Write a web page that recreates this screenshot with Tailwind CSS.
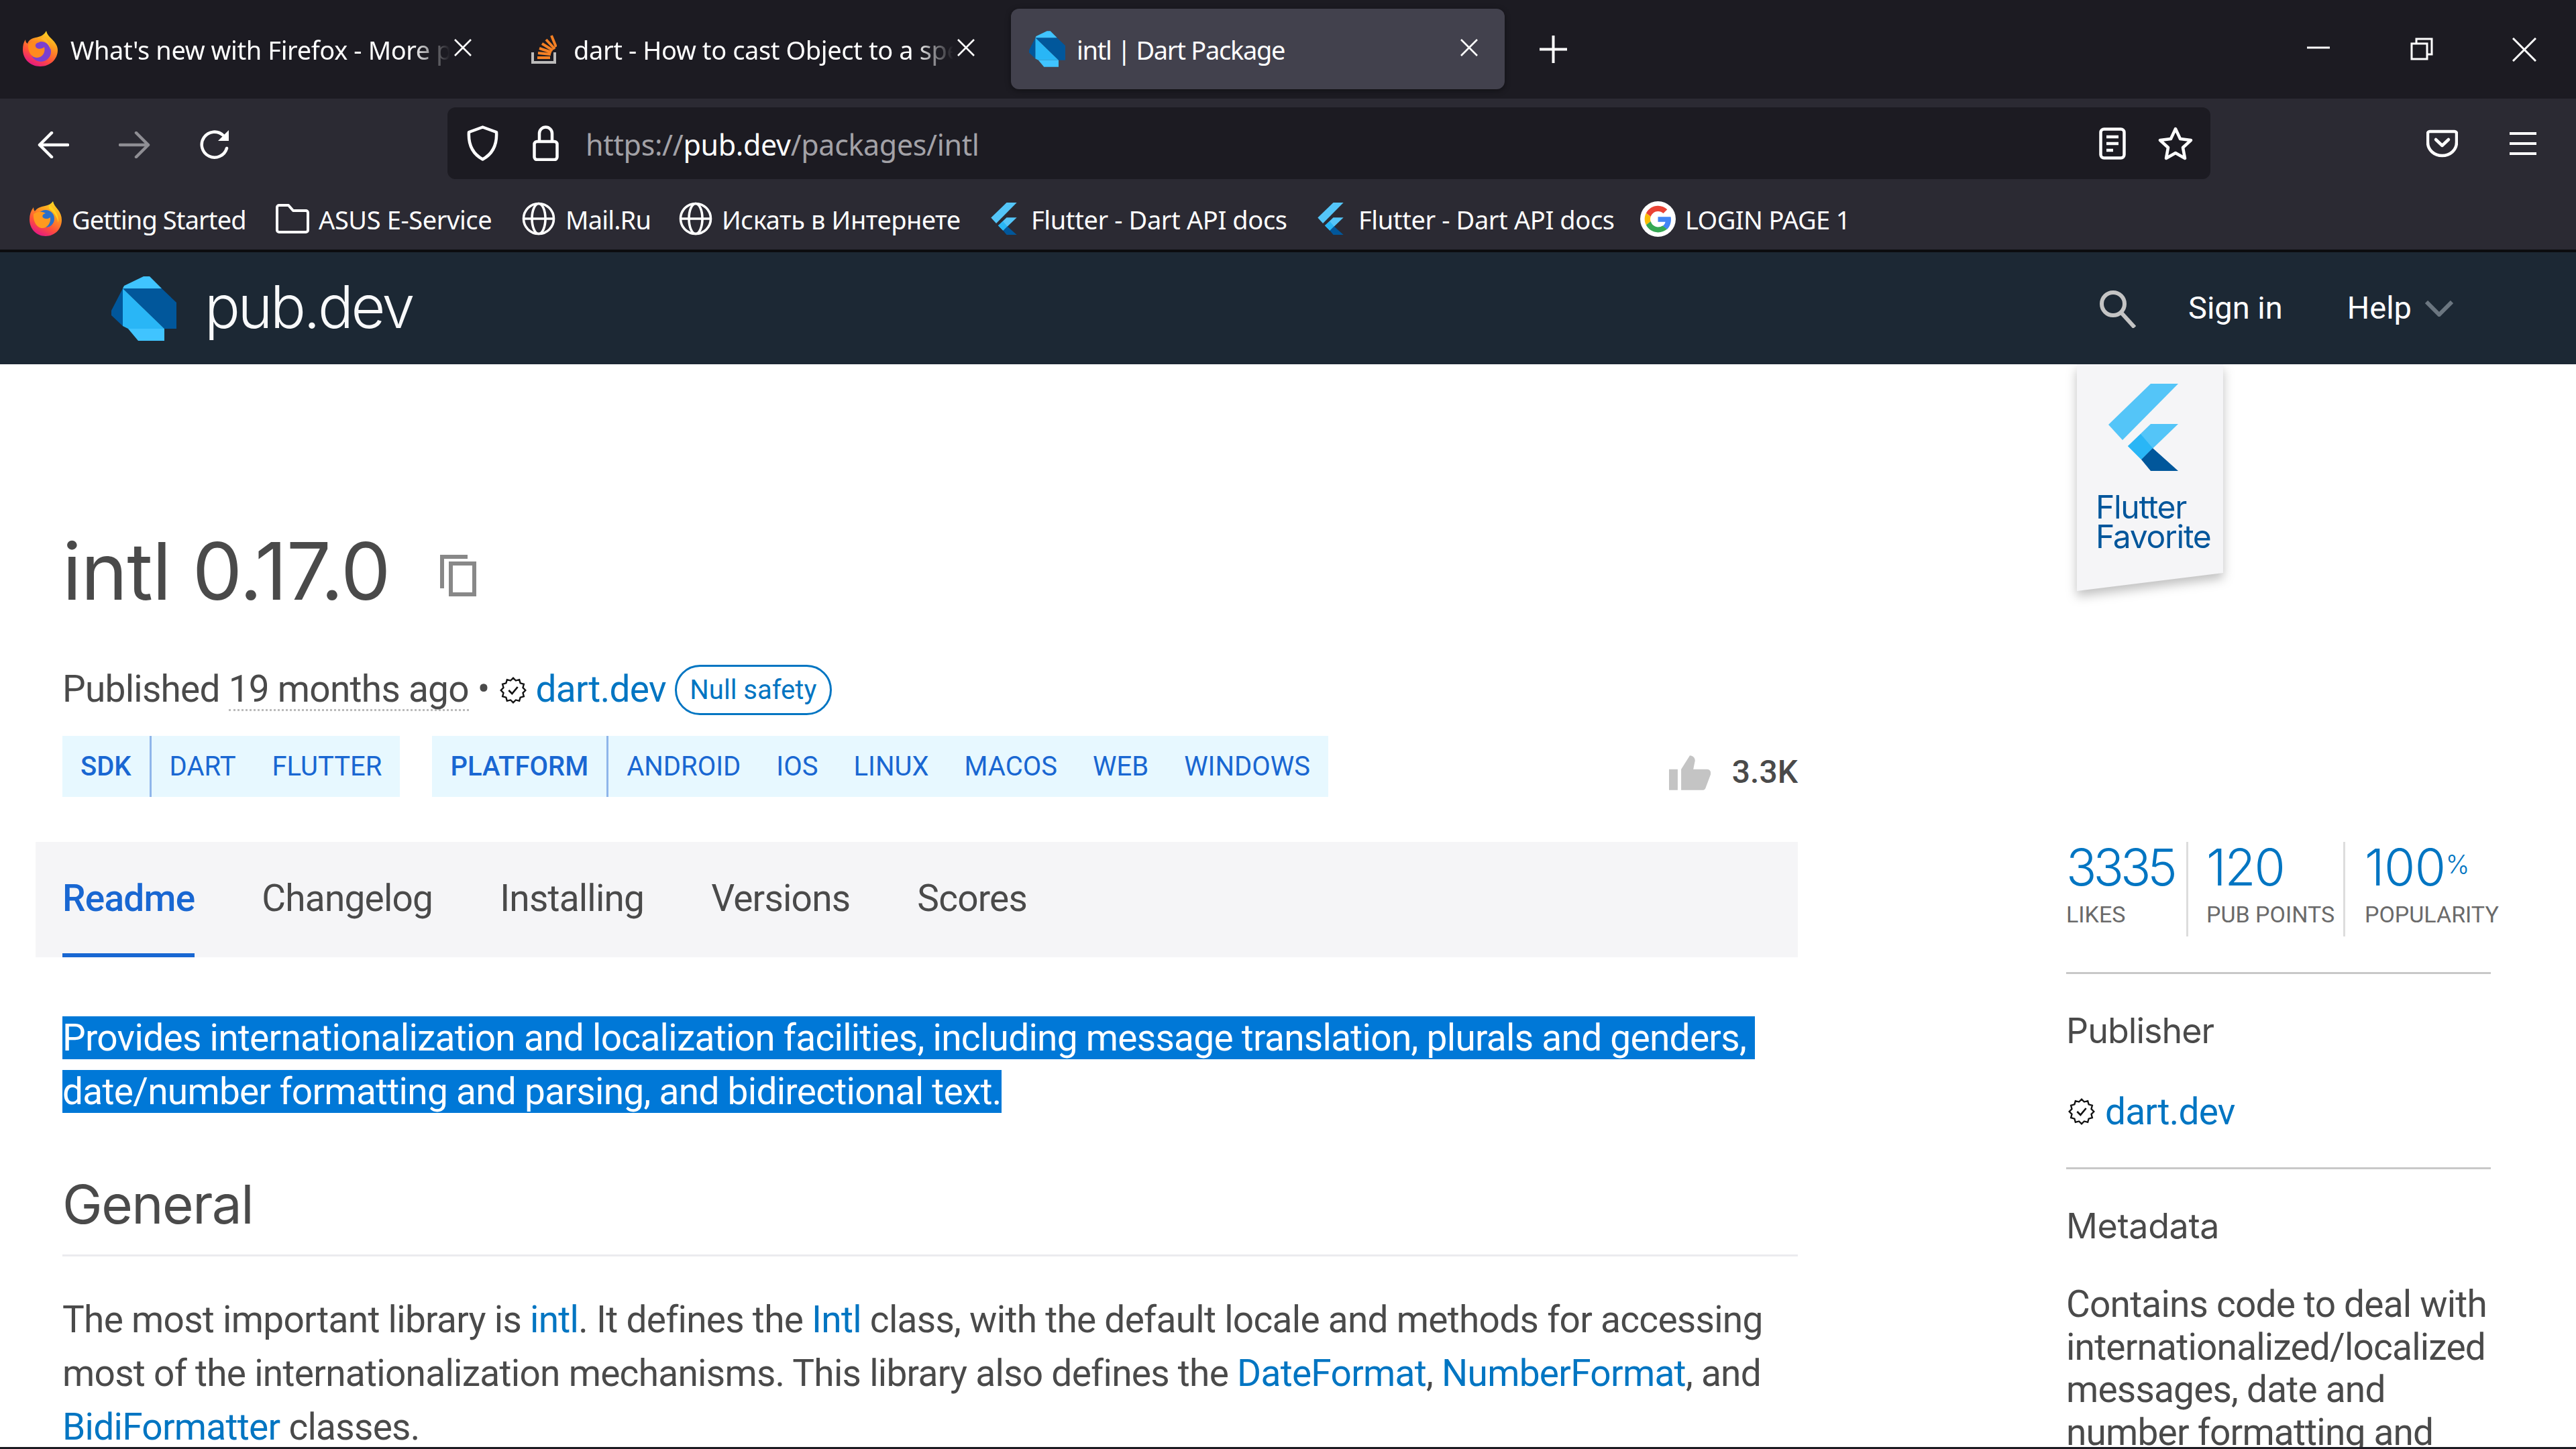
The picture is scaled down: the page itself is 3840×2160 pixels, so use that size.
<!DOCTYPE html>
<html lang="en">
<head>
  <meta charset="UTF-8" />
  <title>intl | Dart Package</title>
  <script src="https://cdn.jsdelivr.net/npm/@tailwindcss/browser@4"></script>
</head>
<body class="w-[3840px] h-[2160px] overflow-hidden bg-white flex flex-col font-[Roboto,sans-serif] text-[#4a4a4a]">

  <!-- shared icons -->
  <svg class="absolute w-0 h-0">
    <defs>
      <linearGradient id="ffOuter" x1="0.8" y1="0" x2="0.3" y2="1">
        <stop offset="0" stop-color="#ffe226"/><stop offset="0.35" stop-color="#ff9a1f"/><stop offset="0.7" stop-color="#ff4f3b"/><stop offset="1" stop-color="#e31587"/>
      </linearGradient>
      <symbol id="firefox" viewBox="0 0 54 54">
        <path fill="url(#ffOuter)" d="M27 53C12 53 1 42 1 28C1 22 2 17 5 13C5 16 6 18 8 19C10 13 15 11 20 10C27 9 33 6 36 0C37 5 40 8 44 12C50 18 53 23 53 29C53 42 42 53 27 53Z"/>
        <circle cx="28" cy="31" r="15" fill="#7b3fd0"/>
        <path fill="#ff8a1f" d="M9 20C15 15 22 14 27 17C21 17 18 21 21 25C24 28 30 27 33 24C35 31 31 40 22 40C14 40 8 31 9 20Z"/>
        <path fill="#ffb52e" d="M27 12C32 13 40 19 42 28C42 22 38 14 33 9Z"/>
      </symbol>
      <symbol id="firefoxOld" viewBox="0 0 50 52">
        <path fill="url(#ffOuter)" d="M25 52C11 52 1 41 1 27C1 20 3 14 7 9C7 12 8 14 9 15C12 10 18 8 24 7C29 6 33 4 36 0C37 5 40 8 43 12C47 17 49 22 49 28C49 41 39 52 25 52Z"/>
        <circle cx="25" cy="26" r="13" fill="#2a6fc9"/>
        <path fill="#ff9a1f" d="M7 19C13 15 20 15 25 18C20 19 19 23 22 25C25 27 30 26 32 24C33 32 28 40 20 40C12 40 6 30 7 19Z"/>
        <path fill="#ffd21f" d="M30 5C37 10 45 19 44 32C42 22 36 15 30 11Z"/>
      </symbol>
      <symbol id="dart" viewBox="0 0 97 96">
        <polygon fill="#01579b" points="17,18 75,18 97,39 97,78 79,78"/>
        <polygon fill="#01579b" points="17,18 0,51 0,58 17,74"/>
        <polygon fill="#29b6f6" points="17,18 79,78 25,78 17,74"/>
        <polygon fill="#40c4ff" points="19,14 48,0 57,0 75,18 17,18"/>
        <polygon fill="#40c4ff" points="25,78 79,78 79,96 40,96"/>
      </symbol>
      <symbol id="flutter" viewBox="0 0 104 130">
        <polygon fill="#54c5f8" points="104,0 63,0 0,61 21,84"/>
        <polygon fill="#54c5f8" points="104,60 63,60 29,93 49,113"/>
        <polygon fill="#29b6f6" points="29,93 48,75 66,96 49,113"/>
        <polygon fill="#01579b" points="49,113 66,96 104,130 63,130"/>
      </symbol>
      <symbol id="globe" viewBox="0 0 50 50">
        <g fill="none" stroke="#fff" stroke-width="3.6">
          <circle cx="25" cy="25" r="22.5"/>
          <ellipse cx="25" cy="25" rx="10" ry="22.5"/>
          <path d="M2.5 25h45"/>
        </g>
      </symbol>
      <symbol id="verified" viewBox="0 0 24 24">
        <polygon fill="none" stroke="#111" stroke-width="1.4" points="12,1 14.33,3.31 17.5,2.47 18.36,5.64 21.53,6.5 20.69,9.67 23,12 20.69,14.33 21.53,17.5 18.36,18.36 17.5,21.53 14.33,20.69 12,23 9.67,20.69 6.5,21.53 5.64,18.36 2.47,17.5 3.31,14.33 1,12 3.31,9.67 2.47,6.5 5.64,5.64 6.5,2.47 9.67,3.31"/>
        <path fill="none" stroke="#111" stroke-width="1.6" d="M8 12l3 3l5-6"/>
      </symbol>
      <symbol id="tabclose" viewBox="0 0 26 26">
        <path fill="none" stroke="#fff" stroke-width="2.6" d="M1 1l24 24M25 1L1 25"/>
      </symbol>
    </defs>
  </svg>

  <!-- TABS -->
  <div class="h-[147px] bg-[#1c1b22] flex pl-[7px] pt-[13px] gap-[14px] shrink-0 text-white text-[38px] font-['Noto_Sans',sans-serif] tracking-[-0.4px]">
    <div class="w-[736px] h-[120px] flex items-center pl-[26px]">
      <svg class="w-[54px] h-[54px] shrink-0"><use href="#firefox"/></svg>
      <span class="ml-[18px] w-[566px] mt-[2px] whitespace-nowrap overflow-hidden [mask-image:linear-gradient(to_right,black_90%,transparent)]">What's new with Firefox - More products</span>
      <svg class="w-[26px] h-[26px] ml-[6px] mb-[4px] shrink-0"><use href="#tabclose"/></svg>
    </div>
    <div class="w-[736px] h-[120px] flex items-center pl-[35px]">
      <svg class="w-[38px] h-[44px] shrink-0" viewBox="0 0 38 44">
        <path fill="none" stroke="#bcbbbb" stroke-width="4" d="M2 27v15h33V27"/>
        <path fill="none" stroke="#f48024" stroke-width="4" d="M9 35h19M10 28l19 2M12 21l18 6M16 14l16 10M22 8l13 14M30 2l7 17"/>
      </svg>
      <span class="ml-[25px] w-[566px] mt-[2px] whitespace-nowrap overflow-hidden [mask-image:linear-gradient(to_right,black_90%,transparent)]">dart - How to cast Object to a specific type</span>
      <svg class="w-[26px] h-[26px] ml-[6px] mb-[4px] shrink-0"><use href="#tabclose"/></svg>
    </div>
    <div class="w-[736px] h-[120px] flex items-center pl-[27px] bg-[#42414d] rounded-[12px] shadow-[0_2px_8px_rgba(0,0,0,0.4)]">
      <svg class="w-[54px] h-[54px] shrink-0"><use href="#dart"/></svg>
      <span class="ml-[17px] w-[572px] mt-[2px] whitespace-nowrap overflow-hidden tracking-[-1.3px]">intl | Dart Package</span>
      <svg class="w-[26px] h-[26px] shrink-0 mb-[4px]"><use href="#tabclose"/></svg>
    </div>
    <div class="h-[120px] flex items-center ml-[38px]">
      <svg class="w-[41px] h-[41px]" viewBox="0 0 41 41"><path stroke="#fff" stroke-width="4" d="M20.5 0v41M0 20.5h41"/></svg>
    </div>
    <!-- window controls -->
    <div class="ml-auto h-[120px] flex items-start pt-[43px] pr-[59px]">
      <svg class="w-[34px] h-[34px] mr-[120px]" viewBox="0 0 34 34"><path stroke="#fff" stroke-width="3" d="M0 15h34"/></svg>
      <svg class="w-[34px] h-[34px] mr-[118px]" viewBox="0 0 34 34"><path fill="none" stroke="#fff" stroke-width="3" d="M2 9h23v23H2zM9 9V2h23v23h-7"/></svg>
      <svg class="w-[36px] h-[36px]" viewBox="0 0 36 36"><path fill="none" stroke="#fff" stroke-width="3" d="M1 1l34 34M35 1L1 35"/></svg>
    </div>
  </div>

  <!-- NAV BAR -->
  <div class="h-[133px] bg-[#2b2a33] flex items-center shrink-0">
    <svg class="w-[47px] h-[40px] ml-[56px] mt-[4px]" viewBox="0 0 47 40"><path fill="none" stroke="#fff" stroke-width="4.5" stroke-linecap="round" stroke-linejoin="round" d="M45 20H3M21 2L3 20l18 18"/></svg>
    <svg class="w-[47px] h-[40px] ml-[74px] mt-[4px]" viewBox="0 0 47 40"><path fill="none" stroke="#8f8e94" stroke-width="4.5" stroke-linecap="round" stroke-linejoin="round" d="M2 20h42M26 2l18 18l-18 18"/></svg>
    <svg class="w-[48px] h-[48px] ml-[73px] mt-[4px]" viewBox="0 0 48 48"><path fill="none" stroke="#fff" stroke-width="4.5" stroke-linecap="round" d="M41 29A19 19 0 1 1 36 10"/><path fill="#fff" d="M44 2v16H28z"/></svg>
    <div class="ml-[322px] w-[2628px] h-[107px] bg-[#1c1b22] rounded-[12px] flex items-center">
      <svg class="w-[47px] h-[53px] ml-[29px]" viewBox="0 0 47 53"><path fill="none" stroke="#fff" stroke-width="4.5" stroke-linejoin="round" d="M23.5 2.5L44 10c1 17-5 32-20.5 40.5C8 42 2 27 3 10z"/></svg>
      <svg class="w-[39px] h-[53px] ml-[51px]" viewBox="0 0 39 53"><path fill="none" stroke="#fff" stroke-width="4.5" d="M10 24V12a9.5 9.5 0 0 1 19 0v12"/><rect x="2.5" y="24" width="34" height="27" rx="4" fill="none" stroke="#fff" stroke-width="4.5"/></svg>
      <span class="ml-[40px] mt-[5px] text-[43px] tracking-[-0.35px] font-['Noto_Sans',sans-serif] text-[#a3a2a7]">https://<span class="text-white">pub.dev</span>/packages/intl</span>
      <svg class="w-[40px] h-[48px] ml-auto" viewBox="0 0 40 48"><rect x="2.5" y="2.5" width="35" height="43" rx="5" fill="none" stroke="#fff" stroke-width="4.5"/><path stroke="#fff" stroke-width="4.5" d="M11 14h18M11 24h18M11 34h10"/></svg>
      <svg class="w-[52px] h-[50px] ml-[48px] mr-[26px]" viewBox="0 0 52 50"><path fill="none" stroke="#fff" stroke-width="4.5" stroke-linejoin="round" d="M26 3l7 15l16 2l-12 11l3 16l-14-8l-14 8l3-16L3 20l16-2z"/></svg>
    </div>
    <svg class="w-[47px] h-[42px] ml-[322px]" viewBox="0 0 47 42"><path fill="none" stroke="#fff" stroke-width="4.5" stroke-linejoin="round" d="M5 3h37a3 3 0 0 1 3 3v13c0 12-10 20-21.5 20S2 31 2 19V6a3 3 0 0 1 3-3z"/><path fill="none" stroke="#fff" stroke-width="4.5" stroke-linecap="round" stroke-linejoin="round" d="M14 15l9.5 9l9.5-9"/></svg>
    <svg class="w-[40px] h-[34px] ml-[77px]" viewBox="0 0 40 34"><path stroke="#fff" stroke-width="4" d="M0 2h40M0 17h40M0 32h40"/></svg>
  </div>

  <!-- BOOKMARKS -->
  <div class="h-[92px] bg-[#2b2a33] flex items-center shrink-0 text-white text-[38px] font-['Noto_Sans',sans-serif] tracking-[-0.4px]">
    <svg class="w-[50px] h-[52px] ml-[43px] shrink-0"><use href="#firefoxOld"/></svg>
    <span class="ml-[14px] w-[259px] mt-[2px] whitespace-nowrap tracking-[-0.9px]">Getting Started</span>
    <svg class="w-[50px] h-[44px] ml-[45px] shrink-0" viewBox="0 0 50 44"><path fill="none" stroke="#fff" stroke-width="4" stroke-linejoin="round" d="M2 5a3 3 0 0 1 3-3h14l7 8h19a3 3 0 0 1 3 3v26a3 3 0 0 1-3 3H5a3 3 0 0 1-3-3z"/></svg>
    <span class="ml-[14px] w-[260px] mt-[2px] whitespace-nowrap">ASUS E-Service</span>
    <svg class="w-[50px] h-[50px] ml-[43px] shrink-0"><use href="#globe"/></svg>
    <span class="ml-[15px] w-[125px] mt-[2px] whitespace-nowrap tracking-[-0.8px]">Mail.Ru</span>
    <svg class="w-[50px] h-[50px] ml-[44px] shrink-0"><use href="#globe"/></svg>
    <span class="ml-[14px] w-[354px] mt-[2px] whitespace-nowrap">Искать в Интернете</span>
    <svg class="w-[39px] h-[48px] ml-[47px] shrink-0"><use href="#flutter"/></svg>
    <span class="ml-[21px] w-[380px] mt-[2px] whitespace-nowrap">Flutter - Dart API docs</span>
    <svg class="w-[39px] h-[48px] ml-[47px] shrink-0"><use href="#flutter"/></svg>
    <span class="ml-[22px] w-[380px] mt-[2px] whitespace-nowrap">Flutter - Dart API docs</span>
    <svg class="w-[53px] h-[53px] ml-[40px] shrink-0" viewBox="0 0 48 48">
      <circle cx="24" cy="24" r="24" fill="#fff"/>
      <path fill="#ea4335" d="M24 13.5c3 0 5.3 1 7.2 2.8l5.3-5.3C33.3 8 29 6 24 6 17 6 11 10 8 16l6.200 4.800c1.500-4.300 5.400-7.300 9.800-7.300z"/>
      <path fill="#4285f4" d="M41.6 24.5c0-1.400-.1-2.400-.4-3.500H24v6.800h10c-.4 2.500-1.800 4.300-3.800 5.700l6 4.600c3.500-3.300 5.400-8 5.400-13.600z"/>
      <path fill="#fbbc05" d="M14.2 27.2c-.4-1-.6-2.100-.6-3.200s.2-2.200.6-3.200L8 16c-1.300 2.500-2 5.200-2 8s.7 5.500 2 8z"/>
      <path fill="#34a853" d="M24 42c5 0 9-1.600 12.200-4.400l-6-4.600c-1.600 1.100-3.600 1.800-6.200 1.800-4.400 0-8.300-3-9.800-7.600L8 32c3 6 9 10 16 10z"/>
    </svg>
    <span class="ml-[14px] mt-[2px] whitespace-nowrap tracking-[-0.6px]">LOGIN PAGE 1</span>
  </div>

  <!-- PUB HEADER -->
  <header class="h-[171px] bg-[#1c2834] border-t-[4px] border-[#0c0c0f] shrink-0 flex items-center">
    <svg class="w-[97px] h-[96px] ml-[166px]"><use href="#dart"/></svg>
    <span class="ml-[42px] text-[88px] tracking-[-3.4px] font-light font-[Inter,sans-serif] text-[#f8f9fa] mb-[6px]">pub.dev</span>
    <svg class="w-[56px] h-[58px] ml-auto" viewBox="0 0 56 58"><circle cx="22" cy="22" r="17" fill="none" stroke="#c4c4c4" stroke-width="6"/><path stroke="#c4c4c4" stroke-width="6" d="M34 35l20 22"/></svg>
    <span class="ml-[78px] text-[47px] text-white">Sign in</span>
    <span class="ml-[96px] text-[47px] text-white">Help</span>
    <svg class="w-[42px] h-[24px] ml-[20px] mr-[183px]" viewBox="0 0 42 24"><path fill="none" stroke="#6b7680" stroke-width="6" d="M2 2l19 19L40 2"/></svg>
  </header>

  <!-- PAGE -->
  <main class="relative flex-1 flex overflow-hidden">
    <!-- flutter favorite ribbon -->
    <div class="absolute left-[3096px] top-0 w-[218px] h-[338px] drop-shadow-[0_8px_8px_rgba(0,0,0,0.25)]">
      <div class="h-full bg-[#f5f5f7] [clip-path:polygon(0_0,100%_0,100%_92%,0_100%)] flex flex-col pt-[29px]">
        <svg class="w-[104px] h-[130px] ml-[47px] shrink-0"><use href="#flutter"/></svg>
        <div class="ml-[28px] mt-[32px] text-[48px] leading-[44px] tracking-[-1.3px] font-[Inter,sans-serif] text-[#02569b]">Flutter<br>Favorite</div>
      </div>
    </div>

    <!-- left column -->
    <div class="ml-[53px] w-[2627px] shrink-0">
      <div class="pl-[40px] mt-[248px] h-[120px] flex items-center">
        <h1 class="text-[118px] leading-[120px] tracking-[-1px] font-[Inter,sans-serif] whitespace-nowrap">intl 0.17.0</h1>
        <svg class="w-[54px] h-[62px] ml-[75px] mt-[14px]" viewBox="0 0 54 62"><path fill="none" stroke="#888" stroke-width="6" d="M3 50V3h38M16 13h35v46H16z"/></svg>
      </div>
      <div class="pl-[40px] mt-[80px] h-[75px] flex items-center text-[55px] whitespace-nowrap">
        <span class="tracking-[-0.75px] mb-[3px]">Published <span class="border-b-[3px] border-dotted border-[#bbb] leading-[60px] inline-block">19 months ago</span> •</span>
        <svg class="w-[40px] h-[40px] ml-[15px] shrink-0"><use href="#verified"/></svg>
        <a class="ml-[14px] mb-[3px] text-[#0175c2] tracking-[-0.7px]">dart.dev</a>
        <span class="ml-[13px] h-[75px] w-[234px] border-[3px] border-[#0175c2] rounded-full text-[40px] text-[#0175c2] flex items-center justify-center">Null safety</span>
      </div>
      <div class="pl-[40px] mt-[31px] h-[91px] flex items-center text-[40px] text-[#1967d2] uppercase">
        <div class="h-full flex items-center bg-[#e7f8ff]">
          <b class="font-medium px-[27px] h-full flex items-center border-r-[3px] border-[#8fb5ea]">SDK</b>
          <span class="ml-[27px]">Dart</span><span class="ml-[54px] mr-[27px]">Flutter</span>
        </div>
        <div class="h-full flex items-center bg-[#e7f8ff] ml-[48px]">
          <b class="font-medium px-[27px] h-full flex items-center border-r-[3px] border-[#8fb5ea]">Platform</b>
          <span class="ml-[27px]">Android</span><span class="ml-[53px]">iOS</span><span class="ml-[53px]">Linux</span><span class="ml-[53px]">macOS</span><span class="ml-[53px]">Web</span><span class="ml-[53px] mr-[27px]">Windows</span>
        </div>
        <svg class="w-[62px] h-[52px] ml-auto mt-[18px]" viewBox="0 0 24 20"><path fill="#c4c4c4" d="M0 8h5v12H0zM7 20V8l5-8c2 0 3 1.5 3 3l-1 5h8c1.500 0 2.500 1.500 2 3l-3 8c-.4.700-1 1-2 1z"/></svg>
        <span class="ml-[32px] mt-[16px] text-[48px] font-medium text-[#4a4a4a] normal-case">3.3K</span>
      </div>
      <div class="mt-[67px] h-[172px] bg-[#f5f5f7] pl-[40px] flex gap-[100px] text-[55px] tracking-[-0.8px]">
        <span class="h-full flex items-center font-medium text-[#1967d2] border-b-[6px] border-[#1967d2] pt-[3px]">Readme</span>
        <span class="h-full flex items-center pb-[3px]">Changelog</span>
        <span class="h-full flex items-center pb-[3px]">Installing</span>
        <span class="h-full flex items-center pb-[3px]">Versions</span>
        <span class="h-full flex items-center pb-[3px]">Scores</span>
      </div>
      <p class="ml-[40px] mt-[80px] text-[55px] leading-[80px] tracking-[-0.72px]"><span class="bg-[#0078d7] text-white">Provides internationalization and localization facilities, including message translation, plurals and genders,&nbsp;<br>date/number formatting and parsing, and bidirectional text.</span></p>
      <h2 class="ml-[40px] mt-[73px] h-[133px] text-[80px] leading-[110px] tracking-[-1.5px] font-[Inter,sans-serif] border-b-[3px] border-[#ebebef]">General</h2>
      <p class="ml-[40px] mt-[54px] text-[55px] leading-[80px] tracking-[-0.72px]">The most important library is <a class="text-[#0175c2]">intl</a>. It defines the <a class="text-[#0175c2]">Intl</a> class, with the default locale and methods for accessing most of the internationalization mechanisms. This library also defines the <a class="text-[#0175c2]">DateFormat</a>, <a class="text-[#0175c2]">NumberFormat</a>, and <a class="text-[#0175c2]">BidiFormatter</a> classes.</p>
    </div>

    <!-- right column -->
    <aside class="ml-[400px] w-[633px] shrink-0 pt-[712px]">
      <div class="h-[141px] flex whitespace-nowrap">
        <div class="w-[182px] border-r-[3px] border-[#ddd] shrink-0">
          <div class="h-[76px] text-[75px] leading-[76px] tracking-[-5px] font-[Inter,sans-serif] font-light text-[#0175c2]">3335</div>
          <div class="text-[34px] mt-[7px] text-[#6a6a6a]">LIKES</div>
        </div>
        <div class="w-[234px] pl-[27px] border-r-[3px] border-[#ddd] shrink-0">
          <div class="h-[76px] text-[75px] leading-[76px] tracking-[-2px] font-[Inter,sans-serif] font-light text-[#0175c2]">120</div>
          <div class="text-[34px] mt-[7px] text-[#6a6a6a]">PUB POINTS</div>
        </div>
        <div class="pl-[29px] shrink-0">
          <div class="h-[76px] text-[75px] leading-[76px] tracking-[-0.5px] font-[Inter,sans-serif] font-light text-[#0175c2]">100<span class="text-[38px] leading-none align-[18px] tracking-normal">%</span></div>
          <div class="text-[34px] mt-[7px] text-[#6a6a6a]">POPULARITY</div>
        </div>
      </div>
      <div class="mt-[53px] border-t-[3px] border-[#c8c8c8]"></div>
      <div class="mt-[50px] h-[70px] text-[52px] leading-[70px] tracking-[-1px] font-[Inter,sans-serif]">Publisher</div>
      <div class="mt-[50px] h-[70px] flex items-center text-[55px]">
        <svg class="w-[40px] h-[40px] ml-[3px] shrink-0"><use href="#verified"/></svg>
        <a class="ml-[15px] text-[#0175c2] tracking-[-0.8px]">dart.dev</a>
      </div>
      <div class="mt-[48px] border-t-[3px] border-[#c8c8c8]"></div>
      <div class="mt-[50px] h-[70px] text-[52px] leading-[70px] tracking-[-0.4px] font-[Inter,sans-serif]">Metadata</div>
      <p class="mt-[50px] text-[55px] leading-[63.5px] tracking-[-0.8px]">Contains code to deal with internationalized/localized messages, date and number formatting and parsing.</p>
    </aside>
  </main>

  <div class="h-[3px] bg-[#1c1b22] shrink-0"></div>
</body>
</html>
